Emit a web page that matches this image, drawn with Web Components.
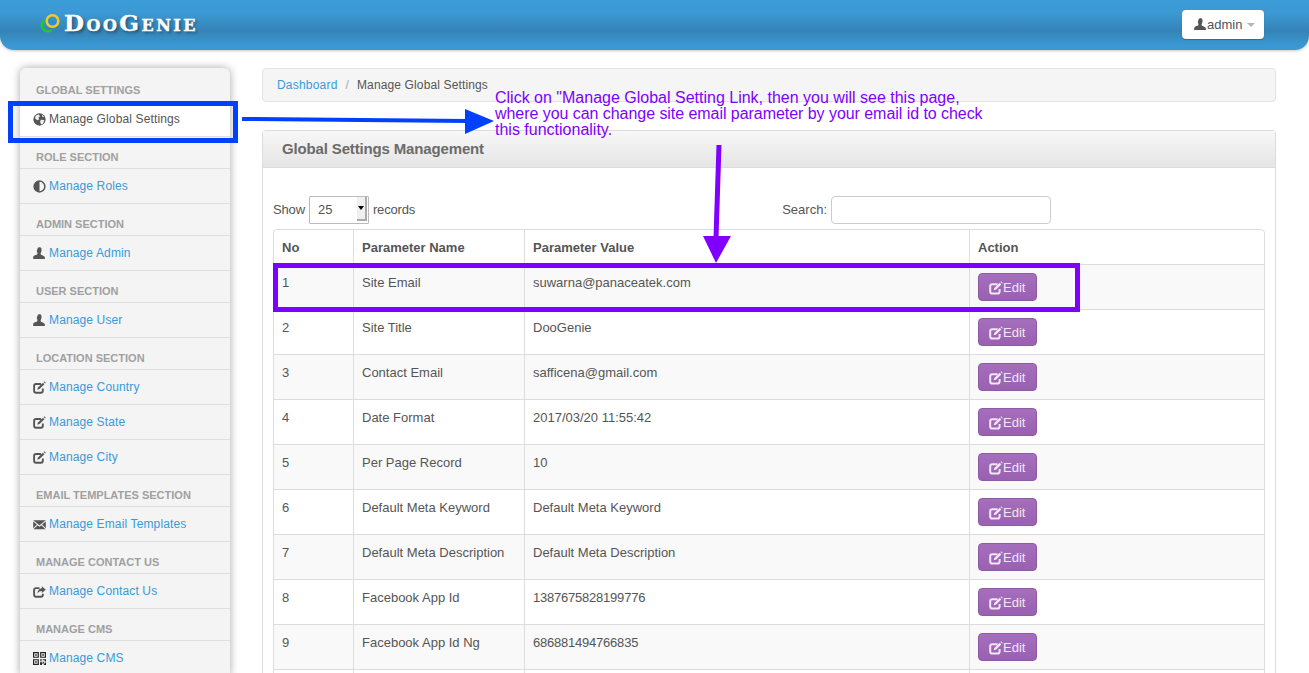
<!DOCTYPE html>
<html>
<head>
<meta charset="utf-8">
<title>Global Settings</title>
<style>
    html, body { margin: 0; height: 100%; background: #fff; overflow: hidden; }
    body { font-family: "Liberation Sans", Arial, sans-serif; font-size: 13px; color: #555; }
</style>
</head>
<body>
<admin-page>
    <top-bar slot="top"></top-bar>
    <side-nav slot="side">
        <nav-section label="Global Settings" first>
            <nav-item icon="globe" active>Manage Global Settings</nav-item>
        </nav-section>
        <nav-section label="Role Section"><nav-item icon="half">Manage Roles</nav-item></nav-section>
        <nav-section label="Admin Section"><nav-item icon="user">Manage Admin</nav-item></nav-section>
        <nav-section label="User Section"><nav-item icon="user">Manage User</nav-item></nav-section>
        <nav-section label="Location Section">
            <nav-item icon="edit">Manage Country</nav-item>
            <nav-item icon="edit">Manage State</nav-item>
            <nav-item icon="edit">Manage City</nav-item>
        </nav-section>
        <nav-section label="Email Templates Section"><nav-item icon="mail">Manage Email Templates</nav-item></nav-section>
        <nav-section label="Manage Contact Us"><nav-item icon="share">Manage Contact Us</nav-item></nav-section>
        <nav-section label="Manage CMS"><nav-item icon="qr">Manage CMS</nav-item></nav-section>
    </side-nav>
    <bread-crumb slot="main"></bread-crumb>
    <settings-panel slot="main" heading="Global Settings Management"></settings-panel>
    <tour-notes slot="over"></tour-notes>
</admin-page>

<script>
// icones dessinees a la main, viewBox 14x14
const ICONS = {
    globe: '<circle cx="7" cy="7" r="6.600" fill="currentColor"/><path d="M3 2.800 6.400 1.600 7.500 3.400 5.700 5 6.800 6.600 4.600 7.800 2.200 5.600ZM8.400 7.400 12.200 7.600 10.900 11.200 8.800 12.400 7.700 9.600ZM9.600 1.900 12 3.800 10.300 4.500Z" fill="#f4f4f4"/>',
    half: '<circle cx="7" cy="7" r="5.800" fill="#f4f4f4" stroke="currentColor" stroke-width="1.600"/><path d="M7 1.200a5.800 5.800 0 0 0 0 11.600Z" fill="currentColor"/>',
    user: '<path d="M5 1.600C5.400.7 6.200.4 7 .4s1.600.3 2 1.200c.4 1 .2 2.600-.2 3.700-.3.8-.6 1.400-.6 2 0 1.100 1.400 1.500 2.800 2.100 1.200.5 1.800 1.200 1.800 2.400V13H.2v-1.600c0-1.200.6-1.900 1.800-2.400 1.400-.6 2.800-1 2.800-2.100 0-.6-.3-1.200-.6-2C3.800 4.200 4.600 2.600 5 1.600Z" fill="currentColor"/>',
    edit: '<path d="M8.600 3.200H3.300C2.100 3.200 1.200 4.100 1.200 5.300v5.200c0 1.200.9 2.100 2.100 2.100h5.200c1.200 0 2.100-.9 2.100-2.100V8" fill="none" stroke="currentColor" stroke-width="2"/><path d="M10.700 1.800 12.300 3.400 7 8.700 4.600 9.300 5.300 7ZM11.500 1 12.200.3 13.800 1.900 13.100 2.600Z" fill="currentColor"/>',
    mail: '<path d="M.2 2.500h13.600L7 7.800ZM.2 3.900 4.300 7.100.2 11ZM13.800 3.900 9.700 7.100 13.800 11ZM5.100 7.800 7 9.300 8.900 7.800 13.600 12H.4Z" fill="currentColor"/>',
    share: '<path d="M7 3.400H3.300C2.100 3.400 1.200 4.300 1.200 5.500v5c0 1.200.9 2.100 2.100 2.100h5.200c1.200 0 2.100-.9 2.100-2.100V9.500" fill="none" stroke="currentColor" stroke-width="2"/><path d="M9.500 1.400 13.800 5 9.500 8.600V6.500C7.600 6.500 5.800 7.300 4.800 9.400c0-3.500 2-5.600 4.700-5.800Z" fill="currentColor"/>',
    qr: '<path fill="#222" fill-rule="evenodd" d="M0 0h6.300v6.300H0ZM1.300 1.300v3.700H5V1.300ZM2.300 2.300H4V4H2.300ZM7.700 0H14v6.300H7.700ZM9 1.300v3.700h3.700V1.300ZM10 2.300h1.700V4H10ZM0 7.700h6.300V14H0ZM1.300 9v3.700H5V9ZM2.300 10H4v1.700H2.300ZM7.700 7.700h1.700v1.700H7.700ZM10.500 7.700H14v2.500h-1.300V9h-2.200ZM7.700 10.500h1.700v1.300h1v-1.300h1.300v2h-2V14H7.700ZM12.600 11.200H14V14h-2.300v-1.300h.9Z"/>'
};

class uiIcon extends HTMLElement {
    constructor() {
        super()
        const size = this.getAttribute('size') || 13;
        const root = this.attachShadow({ mode: 'open' });
        root.innerHTML = `<style>
                :host { display: inline-flex; width: ${size}px; height: ${size}px; flex: none; }
                svg { display: block; width: 100%; height: 100%; }
            </style>
            <svg viewBox="0 0 14 14">${ICONS[this.getAttribute('name')] || ''}</svg>`
    }
}

class adminPage extends HTMLElement {
    constructor() {
        super()
        const root = this.attachShadow({ mode: 'open' });
        root.innerHTML = `<style>
                :host { display: block; position: relative; height: 673px; overflow: hidden; }
                .body { display: flex; align-items: flex-start; padding: 18px 33px 0 20px; gap: 32px; }
                .side { flex: none; width: 210px; }
                .main { flex: 1; min-width: 0; display: flex; flex-direction: column; gap: 28px; }
            </style>
            <slot name="top"></slot>
            <div class="body">
                <div class="side"><slot name="side"></slot></div>
                <div class="main"><slot name="main"></slot></div>
            </div>
            <slot name="over"></slot>`
    }
}

class topBar extends HTMLElement {
    constructor() {
        super()
        const root = this.attachShadow({ mode: 'open' });
        root.innerHTML = `<style>
                :host {
                    display: flex; align-items: flex-start; justify-content: space-between;
                    height: 50px; padding: 0 45px 0 40px; box-sizing: border-box;
                    background: linear-gradient(#3c9dd8 0, #3b98d2 28%, #3583b6 62%, #3a96d0 88%, #3b9ad4 100%);
                    border-radius: 0 0 14px 14px;
                    box-shadow: 0 1px 3px rgba(0,0,0,.22);
                }
                .logo { display: flex; align-items: center; gap: 3px; height: 46px; }
                .logo svg { width: 21px; height: 21px; display: block; margin-top: 1px; }
                .name {
                    font: bold 23px "DejaVu Serif", serif; font-variant: small-caps;
                    color: #fff; letter-spacing: 2.500px; text-shadow: 2px 2px 3px rgba(0,0,0,.4);
                    -webkit-text-stroke: .4px #fff; line-height: 24px; margin-top: -1px;
                }
                .user {
                    display: flex; align-items: center; box-sizing: border-box; margin-top: 10px;
                    width: 82px; height: 29px; padding-left: 12px; background: #fff; border-radius: 4px;
                    box-shadow: 0 1px 1px rgba(0,0,0,.25); color: #4b5560; font-size: 13px;
                }
                .user ui-icon { color: #555; }
                .caret { margin-left: 5px; border: 4px solid transparent; border-top-color: #b5b5b5; border-bottom: 0; }
            </style>
            <div class="logo">
                <svg viewBox="0 0 21 21">
                    <path d="M4.500 6.900A5.600 5.600 0 0 0 11.800 17.200" fill="none" stroke="#22c72a" stroke-width="2.500"/>
                    <circle cx="12.500" cy="8" r="5.800" fill="none" stroke="#f3c92a" stroke-width="2.500"/>
                </svg>
                <span class="name">DooGenie</span>
            </div>
            <div class="user"><ui-icon name="user"></ui-icon><span>admin</span><i class="caret"></i></div>`
    }
}

class sideNav extends HTMLElement {
    constructor() {
        super()
        const root = this.attachShadow({ mode: 'open' });
        root.innerHTML = `<style>
                :host {
                    display: block; background: #f4f4f4; border-radius: 6px 6px 0 0;
                    box-shadow: 0 0 8px rgba(0,0,0,.35);
                }
            </style><slot></slot>`
    }
}

class navSection extends HTMLElement {
    constructor() {
        super()
        const root = this.attachShadow({ mode: 'open' });
        const first = this.hasAttribute('first');
        root.innerHTML = `<style>
                :host { display: block; }
                .label {
                    box-sizing: border-box; height: ${first ? 34 : 32}px; padding: 0 16px 4px;
                    display: flex; align-items: flex-end;
                    font: bold 11px/14px "Liberation Sans", sans-serif; color: #a0a0a0; text-transform: uppercase;
                    border-bottom: 1px solid #dedede;
                }
            </style>
            <div class="label">${this.getAttribute('label')}</div>
            <slot></slot>`
    }
}

class navItem extends HTMLElement {
    constructor() {
        super()
        const root = this.attachShadow({ mode: 'open' });
        root.innerHTML = `<style>
                :host {
                    display: flex; align-items: center; gap: 3px; box-sizing: border-box;
                    height: 35px; padding: 0 0 1px 13px; border-bottom: 1px solid #dedede;
                    font-size: 12px; letter-spacing: .13px; color: #3a9ad9;
                }
                :host([active]) { background: #fff; color: #555; }
                ui-icon { color: #555; margin-top: 1px; }
            </style>
            <ui-icon name="${this.getAttribute('icon')}"></ui-icon><slot></slot>`
    }
}

class breadCrumb extends HTMLElement {
    constructor() {
        super()
        const root = this.attachShadow({ mode: 'open' });
        root.innerHTML = `<style>
                :host {
                    display: flex; align-items: center; box-sizing: border-box; height: 34px; padding: 0 14px;
                    background: #f5f5f5; border: 1px solid #e3e3e3; border-radius: 4px;
                    font-size: 12px; letter-spacing: .13px; color: #555;
                }
                a { color: #3a9ad9; letter-spacing: .2px; }
                i { font-style: normal; color: #aaa; padding: 0 8px; }
            </style>
            <a>Dashboard</a><i>/</i><span>Manage Global Settings</span>`
    }
}

class settingsPanel extends HTMLElement {
    constructor() {
        super()
        const root = this.attachShadow({ mode: 'open' });
        root.innerHTML = `<style>
                :host {
                    display: block; border: 1px solid #dcdcdc; border-bottom: 0; border-radius: 4px 4px 0 0;
                }
                h2 {
                    margin: 0; box-sizing: border-box; height: 37px; padding: 0 19px 2px; display: flex; align-items: center;
                    font: bold 15px "Liberation Sans", sans-serif; letter-spacing: -.15px; color: #6b6b6b;
                    background: linear-gradient(#f7f7f7, #e5e5e5); border-bottom: 1px solid #dcdcdc;
                }
                .wrap { padding: 28px 10px 0; }
            </style>
            <h2>${this.getAttribute('heading')}</h2>
            <div class="wrap">
                <table-tools></table-tools>
                <settings-table></settings-table>
            </div>`
    }
}

class tableTools extends HTMLElement {
    constructor() {
        super()
        const root = this.attachShadow({ mode: 'open' });
        root.innerHTML = `<style>
                :host { display: flex; align-items: center; height: 28px; margin-bottom: 5px; color: #555; font-size: 13px; }
                .txt { padding-bottom: 2px; letter-spacing: -.15px; }
                .size {
                    box-sizing: border-box; width: 60px; height: 28px; margin: 0 4px; padding-left: 8px;
                    display: flex; align-items: flex-start; justify-content: space-between;
                    border: 1px solid #bbb; border-radius: 1px; background: #fff;
                }
                .size span:first-child { line-height: 26px; }
                .spin {
                    box-sizing: border-box; width: 10px; height: 24px; margin-right: 1px; display: flex; align-items: center; justify-content: center;
                    background: #f0f0f0; border-right: 2px solid #aaa; border-bottom: 2px solid #aaa;
                }
                .spin::after { content: ""; border: 3px solid transparent; border-top: 4px solid #000; border-bottom: 0; }
                .search { margin-left: auto; margin-right: 214px; display: flex; align-items: center; gap: 4px; }
                .search .txt { letter-spacing: 0; }
                input {
                    box-sizing: border-box; width: 220px; height: 28px; border: 1px solid #ccc; border-radius: 4px;
                    background: #fff; padding: 0 8px; outline: 0;
                }
            </style>
            <span class="txt">Show</span>
            <div class="size"><span>25</span><span class="spin"></span></div>
            <span class="txt">records</span>
            <div class="search"><span class="txt">Search:</span><input type="text"></div>`
    }
}

const ROWS = [
    ['1', 'Site Email', 'suwarna@panaceatek.com'],
    ['2', 'Site Title', 'DooGenie'],
    ['3', 'Contact Email', 'safficena@gmail.com'],
    ['4', 'Date Format', '2017/03/20 11:55:42'],
    ['5', 'Per Page Record', '10'],
    ['6', 'Default Meta Keyword', 'Default Meta Keyword'],
    ['7', 'Default Meta Description', 'Default Meta Description'],
    ['8', 'Facebook App Id', '<span class="digits">1387675828199776</span>'],
    ['9', 'Facebook App Id Ng', '<span class="digits">686881494766835</span>']
];

class settingsTable extends HTMLElement {
    constructor() {
        super()
        const root = this.attachShadow({ mode: 'open' });
        let body = '';
        ROWS.forEach((r) => {
            body += `<tr><td>${r[0]}</td><td>${r[1]}</td><td>${r[2]}</td><td><edit-button></edit-button></td></tr>`
        });
        root.innerHTML = `<style>
                :host { display: block; }
                table {
                    width: 100%; table-layout: fixed; border-collapse: separate; border-spacing: 0;
                    border: 1px solid #ddd; border-radius: 4px 4px 0 0; font-size: 13px; color: #555;
                }
                th, td {
                    padding: 8px; line-height: 18px; vertical-align: top; text-align: left;
                    border-left: 1px solid #ddd; border-top: 1px solid #ddd;
                }
                th { height: 18px; padding: 9px 8px 7px; font-weight: bold; border-top: 0; }
                td { height: 28px; }
                th:first-child, td:first-child { border-left: 0; }
                tr:nth-child(odd) td { background: #f9f9f9; }
                td:not(:last-child) { line-height: 20px; }
                .digits { letter-spacing: -.22px; }
            </style>
            <table>
                <colgroup><col style="width:79px"><col style="width:171px"><col style="width:445px"><col></colgroup>
                <thead><tr><th>No</th><th>Parameter Name</th><th>Parameter Value</th><th>Action</th></tr></thead>
                <tbody>${body}<tr><td></td><td></td><td></td><td></td></tr></tbody>
            </table>`
    }
}

class editButton extends HTMLElement {
    constructor() {
        super()
        const root = this.attachShadow({ mode: 'open' });
        root.innerHTML = `<style>
                :host {
                    display: flex; align-items: center; box-sizing: border-box;
                    width: 59px; height: 28px; padding-left: 10px; border: 1px solid #8d5ba5; border-radius: 4px;
                    background: linear-gradient(#a56fbd, #9a60b1); color: #f1e6f5; font-size: 13px;
                }
                span { padding-top: 2px; }
                ui-icon { margin-top: 1px; }
            </style>
            <ui-icon name="edit" size="14"></ui-icon><span>Edit</span>`
    }
}

// les annotations du tutoriel, posees par dessus la page
class tourNotes extends HTMLElement {
    constructor() {
        super()
        const root = this.attachShadow({ mode: 'open' });
        root.innerHTML = `<style>
                :host { position: absolute; inset: 0; pointer-events: none; display: block; }
                svg { position: absolute; left: 0; top: 0; }
                p {
                    position: absolute; left: 495px; top: 90px; width: 520px; margin: 0;
                    font: 16px/16px "Liberation Sans", sans-serif; color: #7f00ff;
                }
                span { display: block; }
                .tight { letter-spacing: -.05px; }
            </style>
            <svg width="1309" height="673" fill="none">
                <rect x="10.500" y="103.500" width="225" height="37" stroke="#0040ff" stroke-width="5"/>
                <path d="M242 119 L468 121" stroke="#0040ff" stroke-width="4"/>
                <path d="M465 109 L494 121 L465 134Z" fill="#0040ff"/>
                <rect x="275.500" y="265.500" width="802" height="44" stroke="#7f00ff" stroke-width="5"/>
                <path d="M719 145 L716 238" stroke="#7f00ff" stroke-width="5"/>
                <path d="M703 236 L731 236 L716 263Z" fill="#7f00ff"/>
            </svg>
            <p><span>Click on "Manage Global Setting Link, then you will see this page,</span><span class="tight">where you can change site email parameter by your email id to check</span><span>this functionality.</span></p>`
    }
}

customElements.define('ui-icon', uiIcon)
customElements.define('edit-button', editButton)
customElements.define('settings-table', settingsTable)
customElements.define('table-tools', tableTools)
customElements.define('settings-panel', settingsPanel)
customElements.define('bread-crumb', breadCrumb)
customElements.define('nav-item', navItem)
customElements.define('nav-section', navSection)
customElements.define('side-nav', sideNav)
customElements.define('top-bar', topBar)
customElements.define('tour-notes', tourNotes)
customElements.define('admin-page', adminPage)
</script>
</body>
</html>
